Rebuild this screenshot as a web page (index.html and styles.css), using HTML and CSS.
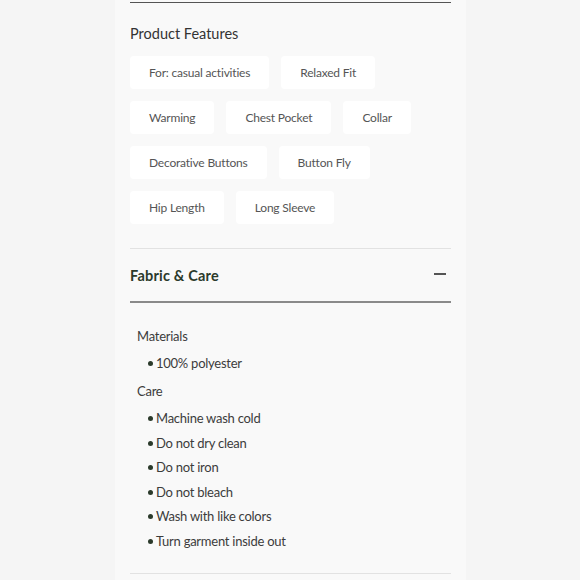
FILE: index.html
```html
<!DOCTYPE html>
<html>
<head>
<meta charset="utf-8">
<link rel="stylesheet" href="styles.css">
</head>
<body>
<div class="page">
  <div class="panel">
    <div class="rule-top"></div>
    <h2 class="features-title">Product Features</h2>
    <div class="chips">
      <div class="chip-row">
        <span class="chip">For: casual activities</span>
        <span class="chip">Relaxed Fit</span>
      </div>
      <div class="chip-row">
        <span class="chip">Warming</span>
        <span class="chip">Chest Pocket</span>
        <span class="chip">Collar</span>
      </div>
      <div class="chip-row">
        <span class="chip">Decorative Buttons</span>
        <span class="chip">Button Fly</span>
      </div>
      <div class="chip-row">
        <span class="chip">Hip Length</span>
        <span class="chip">Long Sleeve</span>
      </div>
    </div>
    <div class="accordion">
      <div class="acc-head">
        <span class="acc-title">Fabric &amp; Care</span>
        <span class="minus"></span>
      </div>
      <div class="acc-body">
        <div class="group-title">Materials</div>
        <ul class="list">
          <li>100% polyester</li>
        </ul>
        <div class="group-title">Care</div>
        <ul class="list">
          <li>Machine wash cold</li>
          <li>Do not dry clean</li>
          <li>Do not iron</li>
          <li>Do not bleach</li>
          <li>Wash with like colors</li>
          <li>Turn garment inside out</li>
        </ul>
      </div>
    </div>
    <div class="rule-bottom"></div>
  </div>
</div>
</body>
</html>
```

FILE: styles.css
```css
html, body {
  margin: 0;
  padding: 0;
  background: #f5f5f5;
  font-family: "Lato", "Liberation Sans", sans-serif;
}
.page {
  display: flex;
  justify-content: center;
  height: 580px;
  overflow: hidden;
}
.panel {
  width: 321px;
  padding: 0 15px;
  margin-left: 1px;
  background: #f9f9f9;
  display: flex;
  flex-direction: column;
}
.rule-top {
  margin-top: 2px;
  height: 1px;
  background: #555;
}
.features-title {
  margin: 22px 0 0 0;
  font-size: 14.5px;
  line-height: 18px;
  font-weight: 400;
  color: #333;
}
.chips {
  margin-top: 13px;
  display: flex;
  flex-direction: column;
  gap: 12px;
}
.chip-row {
  display: flex;
  gap: 12px;
}
.chip {
  background: #fff;
  border-radius: 4px;
  height: 33px;
  line-height: 33px;
  padding: 0 19px;
  font-size: 12px;
  letter-spacing: -0.2px;
  color: #555;
  white-space: nowrap;
}
.accordion {
  margin-top: 24px;
  border-top: 1px solid #e2e2e2;
}
.acc-head {
  display: flex;
  align-items: center;
  justify-content: space-between;
  height: 52px;
  border-bottom: 2px solid #8a8a8a;
}
.acc-title {
  font-size: 14.5px;
  font-weight: 700;
  color: #2b3a2b;
  letter-spacing: 0.2px;
}
.minus {
  width: 12px;
  height: 2px;
  background: #555;
  margin-right: 5px;
  margin-top: -2px;
}
.acc-body {
  padding: 23px 7px 14px 7px;
  color: #444;
  font-size: 13px;
  letter-spacing: -0.25px;
}
.group-title {
  line-height: 20px;
  color: #3c3c3c;
}
.list {
  list-style: none;
  margin: 7px 0 8px 0;
  padding: 0 0 0 11px;
}
.list li {
  position: relative;
  line-height: 20px;
  margin-bottom: 4.5px;
  padding-left: 8px;
  color: #3c3c3c;
}
.list li:last-child {
  margin-bottom: 0;
}
.list li::before {
  content: "";
  position: absolute;
  left: 0;
  top: 8px;
  width: 5px;
  height: 5px;
  border-radius: 50%;
  background: #2b3a2b;
}
.rule-bottom {
  height: 1px;
  background: #e2e2e2;
}
```
